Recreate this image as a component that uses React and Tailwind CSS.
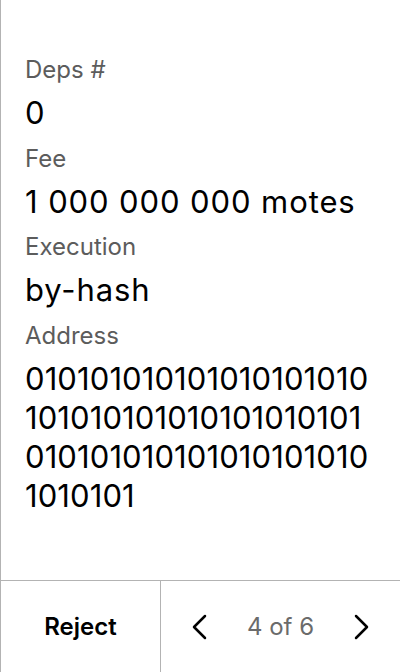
import React from "react";

function Field({ label, children }) {
  return (
    <div className="flex flex-col">
      <div className="text-[24px] leading-[30px] text-[#5c5c5c]">{label}</div>
      <div className="mt-[8px] text-[31px] leading-[39px] text-black">
        {children}
      </div>
    </div>
  );
}

export default function App() {
  const lines = [
    "010101010101010101010",
    "101010101010101010101",
    "010101010101010101010",
    "1010101",
  ];
  return (
    <div
      className="w-[400px] h-[672px] bg-white flex flex-col border-l border-[#b3b3b3]"
      style={{ fontFamily: "Inter, 'Liberation Sans', sans-serif" }}
    >
      <div className="flex-1 flex flex-col gap-[11.5px] pt-[55px] pl-[24px] pr-[10px]">
        <Field label="Deps #">
          <span className="tracking-[0.9px]">0</span>
        </Field>
        <Field label="Fee">
          <span className="tracking-[0.9px]">1 000 000 000 motes</span>
        </Field>
        <Field label="Execution">
          <span className="tracking-[0.9px]">by-hash</span>
        </Field>
        <Field label="Address">
          <div className="flex flex-col tracking-[0.1px] leading-[39.3px]">
            {lines.map((l, i) => (
              <span key={i} className="whitespace-nowrap">
                {l}
              </span>
            ))}
          </div>
        </Field>
      </div>
      <div className="h-[92px] flex border-t border-[#b3b3b3]">
        <div className="w-[160px] flex items-center justify-center border-r border-[#b3b3b3] text-[24px] font-semibold text-black">
          Reject
        </div>
        <div className="flex-1 flex items-center justify-between pl-[26px] pr-[26px]">
          <svg width="24" height="28" viewBox="0 0 24 28" fill="none">
            <path d="M18 3 L7 14 L18 25" stroke="#000" strokeWidth="2.5" strokeLinecap="round" strokeLinejoin="round" />
          </svg>
          <div className="text-[24px] text-[#6b6b6b]">4 of 6</div>
          <svg width="24" height="28" viewBox="0 0 24 28" fill="none">
            <path d="M6 3 L17 14 L6 25" stroke="#000" strokeWidth="2.5" strokeLinecap="round" strokeLinejoin="round" />
          </svg>
        </div>
      </div>
    </div>
  );
}
